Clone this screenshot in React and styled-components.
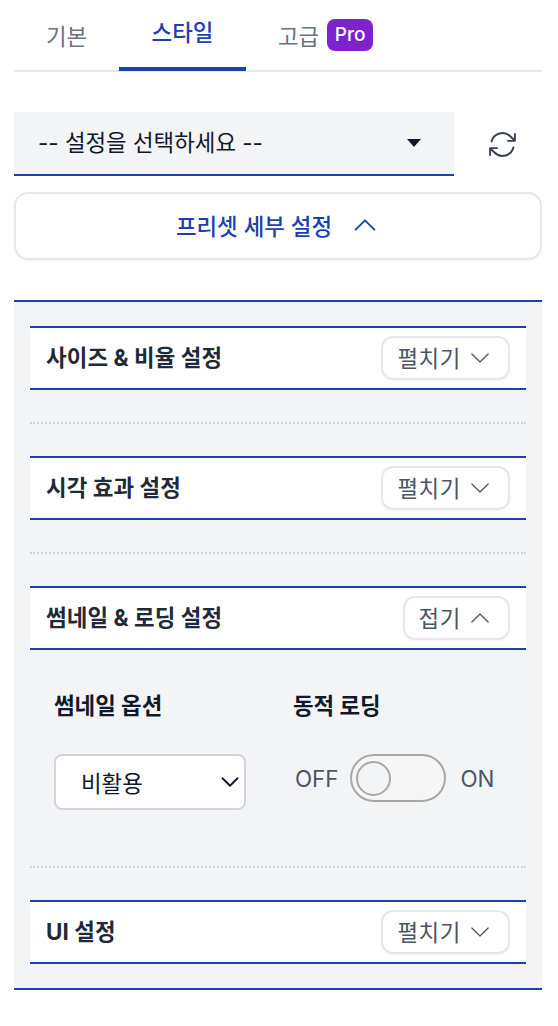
import React from 'react';
import styled, { createGlobalStyle } from 'styled-components';

const GlobalStyle = createGlobalStyle`
  html, body {
    margin: 0;
    padding: 0;
    background: #fff;
  }
  body {
    font-family: Inter, "Noto Sans CJK KR", sans-serif;
  }
  * {
    box-sizing: border-box;
  }
`;

const BLUE = '#1e40af';

const Page = styled.div`
  padding: 0 16px 0 14px;
`;

const Tabs = styled.div`
  display: flex;
  height: 72px;
  padding-top: 1px;
  border-bottom: 2px solid #e5e7eb;
`;

const Tab = styled.div`
  display: flex;
  align-items: center;
  justify-content: center;
  gap: 8px;
  width: ${(p) => p.$width}px;
  height: 70px;
  padding-bottom: ${(p) => (p.$active ? 6 : 3)}px;
  font-size: 22.4px;
  font-weight: ${(p) => (p.$active ? 500 : 400)};
  color: ${(p) => (p.$active ? BLUE : '#6b7280')};
  border-bottom: ${(p) => (p.$active ? `4px solid ${BLUE}` : 'none')};
`;

const ProBadge = styled.span`
  display: inline-flex;
  align-items: center;
  justify-content: center;
  width: 46px;
  height: 32px;
  border-radius: 8px;
  background: #7e22ce;
  color: #fff;
  font-size: 19px;
  font-weight: 500;
`;

const PresetRow = styled.div`
  display: flex;
  align-items: center;
  margin-top: 40px;
`;

const PresetSelect = styled.div`
  display: flex;
  align-items: center;
  justify-content: space-between;
  width: 440px;
  height: 64px;
  padding: 0 33px 0 24px;
  background: #f3f4f6;
  border-bottom: 2px solid ${BLUE};
  color: #111827;
  font-size: 22.4px;
`;

const PresetText = styled.span`
  padding-bottom: 4px;
`;

const Caret = styled.span`
  width: 0;
  height: 0;
  border-left: 7.5px solid transparent;
  border-right: 7.5px solid transparent;
  border-top: 8px solid #111827;
`;

const RefreshButton = styled.div`
  display: flex;
  flex: 1;
  align-items: center;
  justify-content: center;
  height: 64px;
  padding-left: 8px;
  color: #374151;
`;

const DetailsButton = styled.div`
  display: flex;
  align-items: center;
  justify-content: center;
  gap: 18px;
  height: 68px;
  margin-top: 16px;
  padding-bottom: 2px;
  border: 2px solid #e5e7eb;
  border-radius: 14px;
  box-shadow: 0 1px 2px rgba(0, 0, 0, 0.05);
  color: ${BLUE};
  font-size: 22.4px;
  font-weight: 500;
`;

const Panel = styled.div`
  margin-top: 40px;
  padding: 24px 16px;
  background: #f3f4f6;
  border-top: 2px solid ${BLUE};
  border-bottom: 2px solid ${BLUE};
`;

const SectionHeader = styled.div`
  display: flex;
  align-items: center;
  justify-content: space-between;
  height: 64px;
  padding: 0 16px;
  background: #fff;
  border-top: 2px solid ${BLUE};
  border-bottom: 2px solid ${BLUE};
`;

const SectionTitle = styled.div`
  padding-bottom: 5px;
  color: #1f2937;
  font-size: 22.4px;
  font-weight: 700;
  letter-spacing: 0.1px;
`;

const ToggleButton = styled.div`
  display: flex;
  align-items: center;
  gap: 6px;
  height: 44px;
  padding: 0 15px 0 14px;
  border: 2px solid #e5e7eb;
  border-radius: 12px;
  box-shadow: 0 1px 2px rgba(0, 0, 0, 0.05);
  color: #4b5563;
  font-size: 22.4px;
  letter-spacing: 0.6px;
`;

const ToggleLabel = styled.span`
  padding-bottom: 3px;
`;

const Divider = styled.div`
  height: 2px;
  margin: 32px 0;
  border-top: 2px dotted #d1d5db;
`;

const SectionBody = styled.div`
  display: flex;
  padding: 42px 24px 24px;
  height: 184px;
`;

const Field = styled.div`
  display: flex;
  flex-direction: column;
  width: ${(p) => p.$width}px;
`;

const FieldLabel = styled.div`
  height: 32px;
  margin-bottom: 30px;
  color: #111827;
  font-size: 22.4px;
  font-weight: 700;
  line-height: 28px;
`;

const SelectBox = styled.div`
  display: flex;
  align-items: center;
  justify-content: space-between;
  width: 192px;
  height: 56px;
  padding: 0 2px 0 25px;
  border: 2px solid #d1d5db;
  border-radius: 8px;
  background: #fff;
  color: #111827;
  font-size: 22.4px;
`;

const SwitchRow = styled.div`
  display: flex;
  align-items: center;
  gap: 11px;
  height: 48px;
  padding-left: 2px;
  color: #4b5563;
  font-size: 22.4px;
`;

const SwitchTrack = styled.div`
  display: flex;
  align-items: center;
  width: 96px;
  height: 48px;
  margin-right: 4px;
  padding-left: 4px;
  border: 2px solid #a8a8a8;
  border-radius: 24px;
  background: #f6f6f7;
`;

const SwitchThumb = styled.div`
  width: 35px;
  height: 35px;
  border: 2px solid #a8a8a8;
  border-radius: 50%;
  background: #f3f4f6;
`;

const Chevron = ({ up, size = 24, width = 1.5, color = 'currentColor' }) => (
  <svg width={size} height={size} viewBox="0 0 24 24" fill="none" stroke={color} strokeWidth={width} strokeLinecap="round" strokeLinejoin="round">
    <path d={up ? 'M4.5 15.75l7.5-7.5 7.5 7.5' : 'M19.5 8.25l-7.5 7.5-7.5-7.5'} />
  </svg>
);

const RefreshIcon = () => (
  <svg width="33" height="33" viewBox="0 0 24 24" fill="none" stroke="currentColor" strokeWidth="1.4" strokeLinecap="round" strokeLinejoin="round">
    <path d="M16.023 9.348h4.992v-.001M2.985 19.644v-4.992m0 0h4.992m-4.993 0l3.181 3.183a8.25 8.25 0 0013.803-3.7M4.031 9.865a8.25 8.25 0 0113.803-3.7l3.181 3.182m0-4.991v4.99" />
  </svg>
);

const Section = ({ title, open, children }) => (
  <>
    <SectionHeader>
      <SectionTitle>{title}</SectionTitle>
      <ToggleButton>
        <ToggleLabel>{open ? '접기' : '펼치기'}</ToggleLabel>
        <Chevron up={open} size={26} width={1.2} />
      </ToggleButton>
    </SectionHeader>
    {children}
  </>
);

const App = () => {
  return (
    <Page>
      <GlobalStyle />
      <Tabs>
        <Tab $width={105}>기본</Tab>
        <Tab $width={127} $active>스타일</Tab>
        <Tab $width={159}>
          고급 <ProBadge>Pro</ProBadge>
        </Tab>
      </Tabs>

      <PresetRow>
        <PresetSelect>
          <PresetText>-- 설정을 선택하세요 --</PresetText>
          <Caret />
        </PresetSelect>
        <RefreshButton>
          <RefreshIcon />
        </RefreshButton>
      </PresetRow>

      <DetailsButton>
        프리셋 세부 설정
        <Chevron up size={30} />
      </DetailsButton>

      <Panel>
        <Section title="사이즈 & 비율 설정" />
        <Divider />
        <Section title="시각 효과 설정" />
        <Divider />
        <Section title="썸네일 & 로딩 설정" open>
          <SectionBody>
            <Field $width={240}>
              <FieldLabel>썸네일 옵션</FieldLabel>
              <SelectBox>
                비활용
                <Chevron size={24} width={1.8} color="#111827" />
              </SelectBox>
            </Field>
            <Field $width={210}>
              <FieldLabel>동적 로딩</FieldLabel>
              <SwitchRow>
                OFF
                <SwitchTrack>
                  <SwitchThumb />
                </SwitchTrack>
                ON
              </SwitchRow>
            </Field>
          </SectionBody>
        </Section>
        <Divider />
        <Section title="UI 설정" />
      </Panel>
    </Page>
  );
};

export default App;
